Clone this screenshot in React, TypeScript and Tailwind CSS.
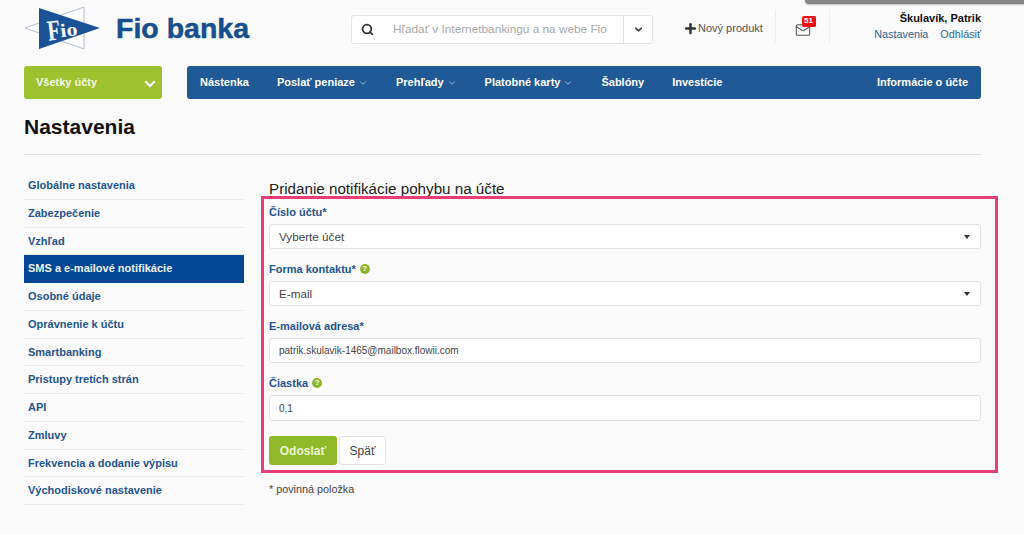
import { ChevronDown, Mail, Plus, Search } from "lucide-react";

const font = "font-['Liberation_Sans',Arial,sans-serif]";

const side = [
  "Globálne nastavenia",
  "Zabezpečenie",
  "Vzhľad",
  "SMS a e-mailové notifikácie",
  "Osobné údaje",
  "Oprávnenie k účtu",
  "Smartbanking",
  "Pristupy tretích strán",
  "API",
  "Zmluvy",
  "Frekvencia a dodanie výpisu",
  "Východiskové nastavenie",
];

const nav: [string, boolean][] = [
  ["Nástenka", false],
  ["Poslať peniaze", true],
  ["Prehľady", true],
  ["Platobné karty", true],
  ["Šablóny", false],
  ["Investície", false],
];

function Logo() {
  return (
    <svg width="78" height="46" viewBox="0 0 78 46" className="shrink-0">
      <path d="M1 22 L60 1 L60 43 Z" fill="#ffffff" stroke="#b4c0d0" strokeWidth="1" />
      <path d="M15 2 L76 22 L15 43 Z" fill="#1a5296" />
      <g transform="rotate(-7 38 22)" fontFamily="'Liberation Serif',serif" fontWeight="700" fill="#f2f5f9">
        <text x="23" y="33" fontSize="29" textLength="13" lengthAdjust="spacingAndGlyphs">F</text>
        <text x="36" y="31" fontSize="19" textLength="17" lengthAdjust="spacingAndGlyphs">io</text>
      </g>
    </svg>
  );
}

function Help() {
  return (
    <span className="inline-flex h-[10px] w-[10px] items-center justify-center rounded-full bg-[#8db52a] text-[8px] font-bold leading-none text-white">
      ?
    </span>
  );
}

function Field({ label, help, children }: { label: string; help?: boolean; children: React.ReactNode }) {
  return (
    <div className="flex flex-col">
      <div className="flex h-[18px] items-center gap-[4px] text-[11px] font-bold text-[#1f5590]">
        <span>{label}</span>
        {help && <Help />}
      </div>
      {children}
    </div>
  );
}

function Box({ text, small, caret, tall }: { text: string; small?: boolean; caret?: boolean; tall?: boolean }) {
  return (
    <div
      className={`mt-[3px] flex ${tall ? "h-[26px]" : "h-[25px]"} items-center justify-between rounded-[3px] border border-[#e2e2e2] bg-white pl-[9px] pr-[10px] ${
        small ? "text-[10px]" : "text-[11.7px]"
      } text-[#444444]`}
    >
      <span>{text}</span>
      {caret && <span className="h-0 w-0 border-x-[3.5px] border-t-[4px] border-x-transparent border-t-[#333333]" />}
    </div>
  );
}

export default function App() {
  return (
    <div className={`${font} relative h-[534px] w-[1024px] overflow-hidden bg-[#fafafa]`}>
      <div className="absolute right-0 top-0 h-[4px] w-[219px] rounded-bl-[4px] bg-[#858585] shadow-[0_1px_2px_rgba(0,0,0,0.25)]" />

      <div className="flex flex-col pl-[24px] pr-[43px]">
        <header className="flex h-[66px] items-start">
          <div className="flex w-[327px] items-start pt-[6px]">
            <Logo />
            <span className="ml-[14px] text-[28.5px] font-bold leading-[44px] text-[#174f8c] [-webkit-text-stroke:0.5px_#174f8c]">
              Fio banka
            </span>
          </div>

          <div className="mt-[15px] flex h-[29px] w-[302px] rounded-[3px] border border-[#e4e4e4] bg-white">
            <div className="flex w-[272px] items-center border-r border-[#e4e4e4]">
              <Search size={13} strokeWidth={3.2} className="ml-[9px] text-[#333333]" />
              <span className="ml-[19px] text-[11.8px] text-[#a8a8a8]">Hľadať v Internetbankingu a na webe Fio</span>
            </div>
            <div className="flex flex-1 items-center justify-center">
              <ChevronDown size={11} strokeWidth={3.5} className="text-[#444444]" />
            </div>
          </div>

          <div className="ml-[30px] mt-[20px] flex h-[17px] w-[81px] items-center">
            <Plus size={15} strokeWidth={4} className="text-[#333333]" />
            <span className="whitespace-nowrap text-[11px] text-[#555555]">Nový produkt</span>
          </div>

          <div className="ml-[11px] mt-[10px] flex h-[33px] w-[55px] items-center justify-center border-x border-[#eeeeee]">
            <div className="relative mt-[6px]">
              <Mail size={16} strokeWidth={1.6} className="text-[#555555]" />
              <span className="absolute left-[7px] top-[-6px] flex h-[11px] w-[14px] items-center justify-center rounded-[2px] bg-[#ee1111] text-[8px] font-bold leading-none text-white">
                51
              </span>
            </div>
          </div>

          <div className="ml-auto mt-[12px] flex flex-col items-end">
            <span className="h-[15px] text-[11px] font-bold leading-[13px] text-[#111111]">Škulavík, Patrik</span>
            <div className="flex gap-[12px] text-[10.8px] leading-[15px] text-[#2b6296]">
              <span>Nastavenia</span>
              <span>Odhlásiť</span>
            </div>
          </div>
        </header>

        <nav className="flex h-[33px] text-[11px] font-bold text-white">
          <div className="flex w-[138px] items-center justify-between rounded-[3px] bg-[#9dc12f] pl-[12px] pr-[4px]">
            <span className="text-[#f4f8e4]">Všetky účty</span>
            <ChevronDown size={16} strokeWidth={3.5} className="mt-[2px]" />
          </div>
          <div className="ml-[25px] flex flex-1 items-center rounded-[3px] bg-[#1f5a96] pl-[13px] pr-[13px]">
            <div className="flex items-center gap-[28px]">
              {nav.map(([t, c]) => (
                <span key={t} className="flex items-center gap-[3px] whitespace-nowrap">
                  {t}
                  {c && <ChevronDown size={10} strokeWidth={2} className="text-[#b9cde2]" />}
                </span>
              ))}
            </div>
            <span className="ml-auto whitespace-nowrap">Informácie o účte</span>
          </div>
        </nav>

        <h1 className="mt-[16px] h-[24px] text-[21px] font-bold leading-[24px] text-[#111111]">Nastavenia</h1>
        <div className="mt-[15px] h-px bg-[#dddddd]" />

        <div className="mt-[17px] flex">
          <aside className="flex w-[220px] shrink-0 flex-col">
            {side.map((s, i) => (
              <div
                key={s}
                className={`flex h-[27.75px] items-center border-b px-[4px] text-[11px] font-bold ${
                  i === 3 ? "border-[#034694] bg-[#034694] text-[#eef3f9]" : "border-[#e9e9e9] text-[#1f5590]"
                }`}
              >
                {s}
              </div>
            ))}
          </aside>

          <main className="relative ml-[25px] flex-1">
            <h2 className="mt-[7px] h-[19px] text-[15.2px] leading-[19px] text-[#222222]">Pridanie notifikácie pohybu na účte</h2>
            <div className="mt-[5px] flex flex-col gap-[11px]">
              <Field label="Číslo účtu*">
                <Box text="Vyberte účet" caret />
              </Field>
              <Field label="Forma kontaktu*" help>
                <Box text="E-mail" caret />
              </Field>
              <Field label="E-mailová adresa*">
                <Box text="patrik.skulavik-1465@mailbox.flowii.com" small />
              </Field>
              <Field label="Čiastka" help>
                <Box text="0,1" small tall />
              </Field>
            </div>
            <div className="mt-[15px] flex gap-[2px]">
              <button className="h-[29px] w-[68px] rounded-[3px] bg-[#8fb82a] text-[12px] font-bold text-[#edf5d2]">Odoslať</button>
              <button className="h-[29px] w-[47px] rounded-[3px] border border-[#e2e2e2] bg-white text-[12px] text-[#444444]">Späť</button>
            </div>
            <p className="mt-[18px] text-[10.8px] leading-[13px] text-[#444444]">* povinná položka</p>
            <div className="pointer-events-none absolute left-[-8px] top-[24px] h-[277px] w-[737px] border-[3px] border-[#e83e78]" />
          </main>
        </div>
      </div>
    </div>
  );
}
